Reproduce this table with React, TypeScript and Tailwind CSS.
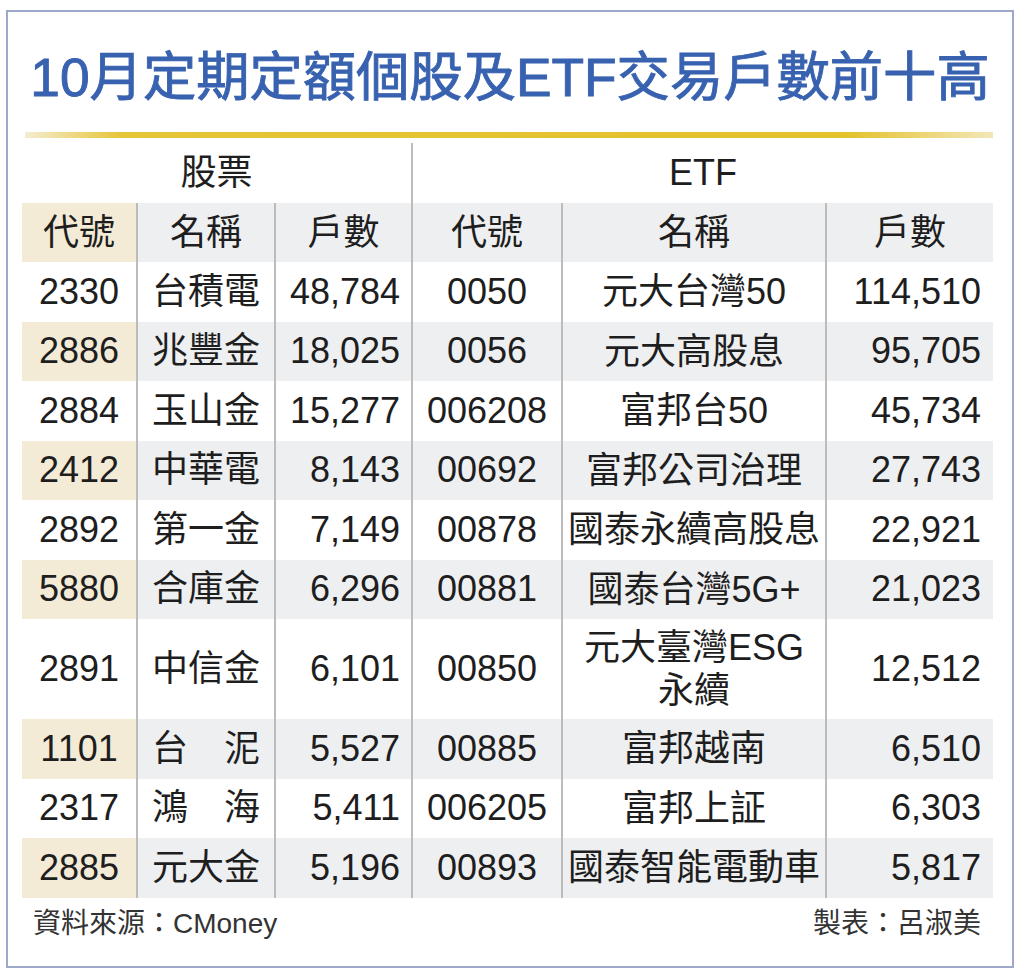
import React from "react";

type Row = {
  code: string;
  name: string;
  count: string;
  etfCode: string;
  etfName: string[];
  etfCount: string;
  shaded: boolean;
  tall?: boolean;
};

const ROWS: Row[] = [
  { code: "2330", name: "台積電", count: "48,784", etfCode: "0050", etfName: ["元大台灣50"], etfCount: "114,510", shaded: false },
  { code: "2886", name: "兆豐金", count: "18,025", etfCode: "0056", etfName: ["元大高股息"], etfCount: "95,705", shaded: true },
  { code: "2884", name: "玉山金", count: "15,277", etfCode: "006208", etfName: ["富邦台50"], etfCount: "45,734", shaded: false },
  { code: "2412", name: "中華電", count: "8,143", etfCode: "00692", etfName: ["富邦公司治理"], etfCount: "27,743", shaded: true },
  { code: "2892", name: "第一金", count: "7,149", etfCode: "00878", etfName: ["國泰永續高股息"], etfCount: "22,921", shaded: false },
  { code: "5880", name: "合庫金", count: "6,296", etfCode: "00881", etfName: ["國泰台灣5G+"], etfCount: "21,023", shaded: true },
  { code: "2891", name: "中信金", count: "6,101", etfCode: "00850", etfName: ["元大臺灣ESG", "永續"], etfCount: "12,512", shaded: false, tall: true },
  { code: "1101", name: "台　泥", count: "5,527", etfCode: "00885", etfName: ["富邦越南"], etfCount: "6,510", shaded: true },
  { code: "2317", name: "鴻　海", count: "5,411", etfCode: "006205", etfName: ["富邦上証"], etfCount: "6,303", shaded: false },
  { code: "2885", name: "元大金", count: "5,196", etfCode: "00893", etfName: ["國泰智能電動車"], etfCount: "5,817", shaded: true },
];

const FONT = "font-['Liberation_Sans','Noto_Sans_CJK_TC',sans-serif]";
const LINE = "border-l-2 border-[#bcbcbc]";

function Cells({ row }: { row: Row }) {
  const h = row.tall ? "h-[100px]" : "h-[59.5px]";
  const beige = row.shaded ? "bg-[#f4ebd6]" : "";
  const gray = row.shaded ? "bg-[#eeeff1]" : "";
  return (
    <>
      <div className={`${h} ${beige} flex items-center justify-center`}>{row.code}</div>
      <div className={`${h} ${gray} ${LINE} flex items-center justify-center`}>{row.name}</div>
      <div className={`${h} ${gray} ${LINE} flex items-center justify-end pr-[11px]`}>{row.count}</div>
      <div className={`${h} ${gray} ${LINE} flex items-center justify-center`}>{row.etfCode}</div>
      <div className={`${h} ${gray} ${LINE} flex flex-col items-center justify-center leading-[43px]`}>
        {row.etfName.map((n) => (
          <span key={n}>{n}</span>
        ))}
      </div>
      <div className={`${h} ${gray} ${LINE} flex items-center justify-end pr-[12px]`}>{row.etfCount}</div>
    </>
  );
}

export default function App() {
  return (
    <div className={`w-[1024px] h-[971px] bg-white pt-[10px] pl-[6px] ${FONT}`}>
      <div className="w-[1008px] h-[958px] border-2 border-[#9ea9c9] flex flex-col">
        {/* title */}
        <h1 className="mt-[34px] h-[64px] flex items-center justify-center text-[53.3px] font-normal leading-none text-[#3862b0] [-webkit-text-stroke:0.9px_#3862b0]">
          10月定期定額個股及ETF交易戶數前十高
        </h1>

        {/* gold rule */}
        <div className="mt-[22px] ml-[17px] w-[968px] h-[6px] bg-[linear-gradient(to_right,#f4ecd0_0%,#e6c536_10%,#e4c22c_85%,#f3e7b8_100%)]" />

        {/* table */}
        <div className="mt-[5px] ml-[14px] w-[971px] text-[36px] text-[#1e1e1e] grid grid-cols-[114px_138px_137px_150px_264px_168px]">
          <div className="col-span-3 h-[60px] flex items-center justify-center">股票</div>
          <div className={`col-span-3 h-[60px] ${LINE} flex items-center justify-center`}>ETF</div>

          <div className="h-[59px] bg-[#f4ebd6] flex items-center justify-center">代號</div>
          <div className={`h-[59px] bg-[#eeeff1] ${LINE} flex items-center justify-center`}>名稱</div>
          <div className={`h-[59px] bg-[#eeeff1] ${LINE} flex items-center justify-center`}>戶數</div>
          <div className={`h-[59px] bg-[#eeeff1] ${LINE} flex items-center justify-center`}>代號</div>
          <div className={`h-[59px] bg-[#eeeff1] ${LINE} flex items-center justify-center`}>名稱</div>
          <div className={`h-[59px] bg-[#eeeff1] ${LINE} flex items-center justify-center`}>戶數</div>

          {ROWS.map((r) => (
            <Cells key={r.code} row={r} />
          ))}
        </div>

        {/* footer */}
        <div className="mt-[9px] pl-[25px] pr-[31px] flex items-center justify-between text-[28px] text-[#333] h-[34px]">
          <span>資料來源：CMoney</span>
          <span>製表：呂淑美</span>
        </div>
      </div>
    </div>
  );
}
